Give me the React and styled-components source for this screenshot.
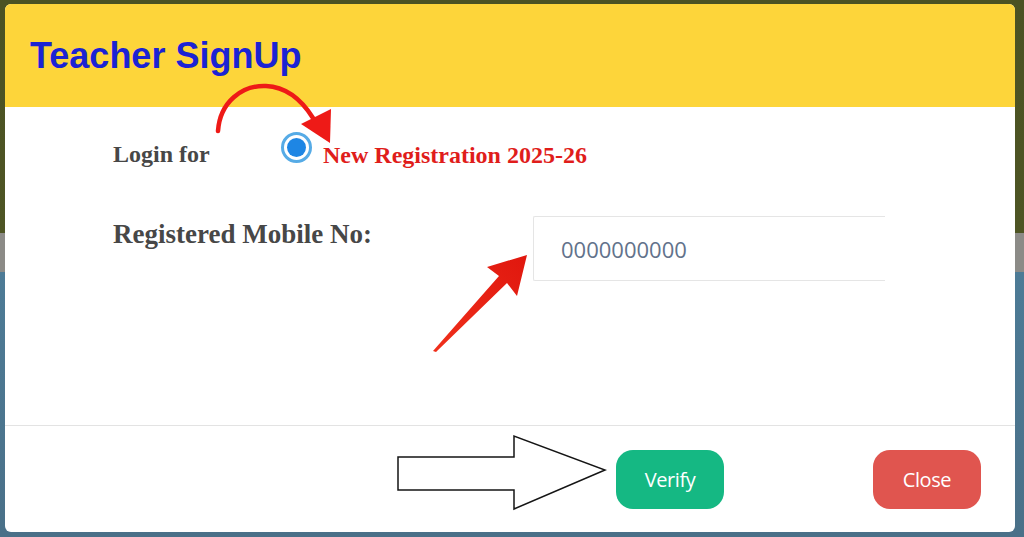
import React from "react";
import styled, { createGlobalStyle } from "styled-components";

const GlobalStyle = createGlobalStyle`
  html, body {
    margin: 0;
    padding: 0;
  }
  body {
    font-family: "Liberation Sans", Arial, sans-serif;
  }
`;

const Page = styled.div`
  position: relative;
  width: 1024px;
  height: 537px;
  box-sizing: border-box;
  padding: 4px 9px 5px 5px;
  overflow: hidden;
  background: linear-gradient(
    to bottom,
    #4b5223 0px,
    #4e5524 233px,
    #8c8b87 233px,
    #8c8b87 272px,
    #4d7b96 272px,
    #4a7088 537px
  );
`;

const Dialog = styled.div`
  height: 528px;
  display: flex;
  flex-direction: column;
  background: #ffffff;
  border-radius: 6px;
  overflow: hidden;
`;

const Header = styled.div`
  height: 103px;
  box-sizing: border-box;
  padding: 34px 25px 0;
  background: #fdd53a;
`;

const Title = styled.h1`
  margin: 0;
  font-family: "Liberation Sans", Arial, sans-serif;
  font-size: 36px;
  line-height: 36px;
  font-weight: 700;
  color: #1b23d3;
`;

const Body = styled.div`
  flex: 1;
  display: flex;
  flex-direction: column;
  gap: 49px;
  padding: 25px 0 0 108px;
`;

const Row = styled.div`
  display: flex;
  align-items: flex-start;
`;

const Label = styled.div`
  width: ${(p) => p.$width}px;
  margin-top: ${(p) => p.$offset}px;
  font-family: "Liberation Serif", "Times New Roman", serif;
  font-size: ${(p) => p.$size}px;
  line-height: ${(p) => p.$size}px;
  font-weight: 700;
  color: #474747;
`;

const RadioWrap = styled.label`
  display: flex;
  align-items: flex-start;
  gap: 11px;
  cursor: pointer;
`;

const RadioDot = styled.span`
  width: 31px;
  height: 31px;
  box-sizing: border-box;
  border: 3px solid #56abe6;
  border-radius: 50%;
  display: flex;
  align-items: center;
  justify-content: center;

  &::after {
    content: "";
    width: 19px;
    height: 19px;
    border-radius: 50%;
    background: #1e86e4;
  }
`;

const RadioText = styled.span`
  margin-top: 11px;
  font-family: "Liberation Serif", "Times New Roman", serif;
  font-size: 24px;
  line-height: 24px;
  font-weight: 700;
  color: #e01d1b;
`;

const Input = styled.input`
  width: 352px;
  height: 65px;
  box-sizing: border-box;
  padding: 0 0 0 27px;
  border: 1px solid #e5e5e5;
  border-right: none;
  border-radius: 2px 0 0 2px;
  outline: none;
  font-family: "Open Sans", sans-serif;
  font-size: 22px;
  color: #333;

  &::placeholder {
    color: #62728b;
  }
`;

const Footer = styled.div`
  height: 107px;
  box-sizing: border-box;
  border-top: 1px solid #e3e3e3;
  display: flex;
  align-items: center;
  justify-content: flex-end;
  gap: 149px;
  padding-right: 34px;
`;

const Button = styled.button`
  width: 108px;
  height: 59px;
  border: none;
  border-radius: 17px;
  background: ${(p) => p.$bg};
  color: #ffffff;
  font-family: "Open Sans", sans-serif;
  font-size: 20px;
  letter-spacing: -0.4px;
  cursor: pointer;
`;

const Annotations = styled.svg`
  position: absolute;
  top: 0;
  left: 0;
  pointer-events: none;
`;

export default function App() {
  return (
    <>
      <GlobalStyle />
      <Page>
        <Dialog>
          <Header>
            <Title>Teacher SignUp</Title>
          </Header>
          <Body>
            <Row>
              <Label $width={168} $offset={10} $size={24}>Login for</Label>
              <RadioWrap>
                <RadioDot />
                <RadioText>New Registration 2025-26</RadioText>
              </RadioWrap>
            </Row>
            <Row>
              <Label $width={420} $offset={5} $size={27}>Registered Mobile No:</Label>
              <Input placeholder="0000000000" />
            </Row>
          </Body>
          <Footer>
            <Button $bg="#15b883">Verify</Button>
            <Button $bg="#e0554f">Close</Button>
          </Footer>
        </Dialog>

        <Annotations width="1024" height="537" viewBox="0 0 1024 537">
          <defs>
            <linearGradient id="redArrow" x1="0" y1="1" x2="1" y2="0">
              <stop offset="0" stopColor="#f0301c" />
              <stop offset="1" stopColor="#e0170e" />
            </linearGradient>
          </defs>
          {/* curved arrow to the radio option */}
          <path
            d="M218 131 C220 102 242 85 266 86 C288 87 303 102 313 118"
            fill="none"
            stroke="#ee1a17"
            strokeWidth="4.5"
            strokeLinecap="round"
          />
          <polygon points="301,124 331,109 330,143" fill="#ee1a17" />
          {/* straight arrow to the input */}
          <polygon
            points="433,351 499,276 487,267 527,255 517,296 507,283 436,352"
            fill="url(#redArrow)"
          />
          {/* outline arrow to verify */}
          <polygon
            points="398,457 514,457 514,436 605,470 514,509 514,490 398,490"
            fill="#ffffff"
            stroke="#151515"
            strokeWidth="1.5"
            strokeLinejoin="miter"
          />
        </Annotations>
      </Page>
    </>
  );
}
